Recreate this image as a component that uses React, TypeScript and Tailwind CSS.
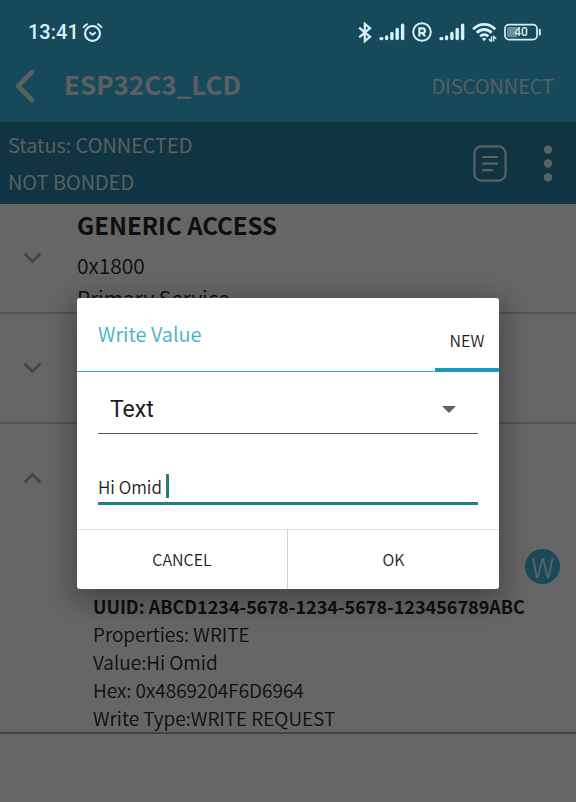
import { useState } from "react"

type ServiceRowProps = {
  open?: boolean
  children?: React.ReactNode
}

const characteristic = [
  "Properties: WRITE",
  "Value:Hi Omid",
  "Hex: 0x4869204F6D6964",
  "Write Type:WRITE REQUEST",
]

const AlarmIcon = () => (
  <svg width="21" height="21" viewBox="0 0 22 22" fill="none" stroke="currentColor" aria-hidden="true">
    <circle cx="11" cy="12" r="7.8" strokeWidth="2.2" />
    <path d="M7.8 10.8l3.2 2.6 3.4-2.6" strokeWidth="2" />
    <path d="M1.2 6.2Q2.8 3.2 6 2M20.8 6.2Q19.2 3.2 16 2" strokeWidth="1.9" />
  </svg>
)

const BluetoothIcon = () => (
  <svg width="14" height="21" viewBox="0 0 14 21" fill="none" stroke="currentColor" strokeWidth="2.2" aria-hidden="true">
    <path d="M1.2 5.6l10.8 9.2-5.2 4.4V1.8L12 6.2 1.2 15.4" />
  </svg>
)

const SignalIcon = () => (
  <svg width="26" height="18" viewBox="0 0 26 18" fill="none" stroke="currentColor" strokeWidth="3.4" strokeLinecap="round" aria-hidden="true">
    <path d="M2 15.6h.8M7.6 15.6v-1.6M12.9 15.6v-5.1M18.2 15.6V6.4" />
    <path d="M23.6 15.6V2.2" />
  </svg>
)

const RoamingIcon = () => (
  <svg width="20" height="20" viewBox="0 0 20 20" fill="none" stroke="currentColor" strokeWidth="2.2" aria-hidden="true">
    <circle cx="10" cy="10" r="8.8" strokeWidth="1.9" />
    <path d="M7.4 14.4V6.4h3.2a2.3 2.3 0 010 4.6H7.4M10.4 11l2.6 3.4" />
  </svg>
)

const WifiIcon = () => (
  <svg width="25" height="20" viewBox="0 0 25 20" fill="none" stroke="currentColor" strokeWidth="2.8" aria-hidden="true">
    <path d="M1.2 7.2Q6 2.4 12.2 2.4T23.2 7.2" />
    <path d="M4.8 10.8Q8 7.5 12.2 7.5t7.4 3.3" />
    <path d="M8.2 14.4q1.7-1.8 4-1.8 2.4 0 4 1.8" />
    <path d="M10 16.6q2.2-1.8 4.4 0l-2.2 2.6z" fill="currentColor" stroke="none" />
    <path d="M19.4 14.4v5l-2.6-2.2M21.6 19.6v-5l2.6 2.2" strokeWidth="1.4" />
  </svg>
)

const BatteryIcon = () => (
  <svg width="38" height="18" viewBox="0 0 38 18" role="img" aria-label="Battery 40%">
    <rect x="1" y="1.6" width="32" height="15" rx="4" fill="none" stroke="currentColor" strokeWidth="1.7" />
    <path d="M5 4h8v10.2H5a2 2 0 01-2-2V6a2 2 0 012-2z" fill="#6b909d" />
    <path d="M35.8 6.8v4.6" stroke="currentColor" strokeWidth="2" strokeLinecap="round" />
    <text x="17" y="13.4" textAnchor="middle" fontSize="12" fill="currentColor" className="font-['Roboto',sans-serif] font-medium">
      40
    </text>
  </svg>
)

const StatusBar = () => (
  <div className="relative z-20 flex h-16 items-center justify-between pr-[34px] pl-7 text-[#d5f1fa]">
    <div className="flex items-center gap-[3px]">
      <span className="font-['Roboto',sans-serif] text-xl font-medium">13:41</span>
      <AlarmIcon />
    </div>
    <div className="flex items-center gap-[7px]">
      <BluetoothIcon />
      <SignalIcon />
      <RoamingIcon />
      <SignalIcon />
      <WifiIcon />
      <BatteryIcon />
    </div>
  </div>
)

const ServiceRow = ({ open, children }: ServiceRowProps) => (
  <div className="flex h-[108px] items-center">
    <button className="flex w-[77px] shrink-0 pl-[23px] text-[#b0b0b0]" aria-label={open ? "Collapse" : "Expand"}>
      <svg width="19" height="12" viewBox="0 0 19 12" fill="none" stroke="currentColor" strokeWidth="2.8">
        <path d={open ? "M1.5 10.5l8-8 8 8" : "M1.5 1.5l8 8 8-8"} />
      </svg>
    </button>
    <div className="self-start">{children}</div>
  </div>
)

const WriteDialog = () => {
  const [value, setValue] = useState("Hi Omid")

  return (
    <div className="absolute inset-0 z-10 bg-black/60 px-[77px] pt-[298px]">
      <div
        role="dialog"
        aria-labelledby="write-title"
        className="rounded-[3px] bg-white text-[#1c1c1c] shadow-[0_8px_28px_6px_rgba(0,0,0,0.3)]"
      >
        <div className="flex h-[74px] items-stretch justify-between border-b border-[#2fa8cc]">
          <h2 id="write-title" className="flex items-center pb-0.5 pl-[21px] text-xl text-[#45b0cc]">
            Write Value
          </h2>
          <button className="-mb-px w-16 border-b-4 border-[#1a9abd] pt-3.5 text-base">NEW</button>
        </div>

        <div className="px-[21px]">
          <div className="relative border-b border-[#555]">
            <select
              aria-label="Value type"
              className="h-[61px] w-full appearance-none bg-transparent pt-4 pl-3 font-['Roboto',sans-serif] text-[23px] font-normal outline-none"
            >
              <option>Text</option>
            </select>
            <svg className="pointer-events-none absolute right-[22px] bottom-5" width="14" height="7" viewBox="0 0 14 7">
              <path d="M0 0h14L7 7z" fill="#606060" />
            </svg>
          </div>
          <div className="mt-9 flex h-[35px] items-center gap-1 border-b-3 border-[#1f8274]">
            <input
              aria-label="Value"
              value={value}
              onChange={(e) => setValue(e.target.value)}
              className="field-sizing-content pt-0.5 text-[17px] outline-none"
            />
            <span className="h-6 w-[3px] bg-[#1f8274]" />
          </div>
        </div>

        <div className="mt-6 grid h-[60px] grid-cols-2 border-t border-[#e0e0e0] text-base">
          <button className="border-r border-[#d0d0d0] pb-0.5">CANCEL</button>
          <button className="pb-0.5">OK</button>
        </div>
      </div>
    </div>
  )
}

export default function App() {
  return (
    <div className="relative min-h-screen bg-white font-['Noto_Sans_CJK_SC','Noto_Sans',sans-serif] font-[350] text-[#262626]">
      <header className="bg-[#38b9e2] text-[#e3eef2]">
        <StatusBar />
        <div className="flex h-[58px] items-start justify-between pr-[22px] pl-[15px]">
          <div className="flex h-11 items-center gap-[29px]">
            <button aria-label="Back">
              <svg width="20" height="34" viewBox="0 0 20 34" fill="none" stroke="currentColor" strokeWidth="4.6" strokeLinecap="round" strokeLinejoin="round">
                <path d="M17 3L3 17l14 14" />
              </svg>
            </button>
            <h1 className="pb-1.5 text-[26px] font-bold">ESP32C3_LCD</h1>
          </div>
          <button className="h-11 text-xl">DISCONNECT</button>
        </div>
      </header>

      <section className="flex items-center justify-between bg-[#2a82a2] py-1 pr-[23px] pl-2 text-xl leading-[37px] text-[#e3f4fa]">
        <div>
          <p>Status: CONNECTED</p>
          <p>NOT BONDED</p>
        </div>
        <div className="flex items-center gap-9">
          <button aria-label="Log">
            <svg width="34" height="37" viewBox="0 0 34 37" fill="none" stroke="currentColor" strokeWidth="2.2" strokeLinecap="round">
              <rect x="1.4" y="1.4" width="31.2" height="34.2" rx="7" />
              <path d="M10 12h14M10 18.6h14M10 25.2h9" />
            </svg>
          </button>
          <button aria-label="More options">
            <svg width="10" height="37" viewBox="0 0 10 37" fill="currentColor">
              <circle cx="5" cy="4.6" r="4.2" />
              <circle cx="5" cy="18.5" r="4.2" />
              <circle cx="5" cy="32.4" r="4.2" />
            </svg>
          </button>
        </div>
      </section>

      <main>
        <div className="border-b-2 border-[#cfcfcf]">
          <ServiceRow>
            <h2 className="pt-[3px] text-2xl leading-9 font-bold">GENERIC ACCESS</h2>
            <p className="pt-1 text-[21px] leading-9">0x1800</p>
            <p className="pt-[3px] text-[21px] leading-6">Primary Service</p>
          </ServiceRow>
        </div>
        <div className="border-b-2 border-[#cfcfcf]">
          <ServiceRow />
        </div>
        <div className="border-b-2 border-[#a8a8a8]">
          <ServiceRow open />
          <div className="flex justify-end pt-[17px] pr-4">
            <button className="size-[35px] rounded-full bg-[#41b8da] text-[27px] leading-[34px] font-light text-white">W</button>
          </div>
          <div className="pt-2 pl-[93px] text-[19px] leading-7">
            <p className="text-lg leading-7 font-bold">UUID: ABCD1234-5678-1234-5678-123456789ABC</p>
            {characteristic.map((line) => (
              <p key={line}>{line}</p>
            ))}
          </div>
        </div>
      </main>

      <WriteDialog />
    </div>
  )
}
